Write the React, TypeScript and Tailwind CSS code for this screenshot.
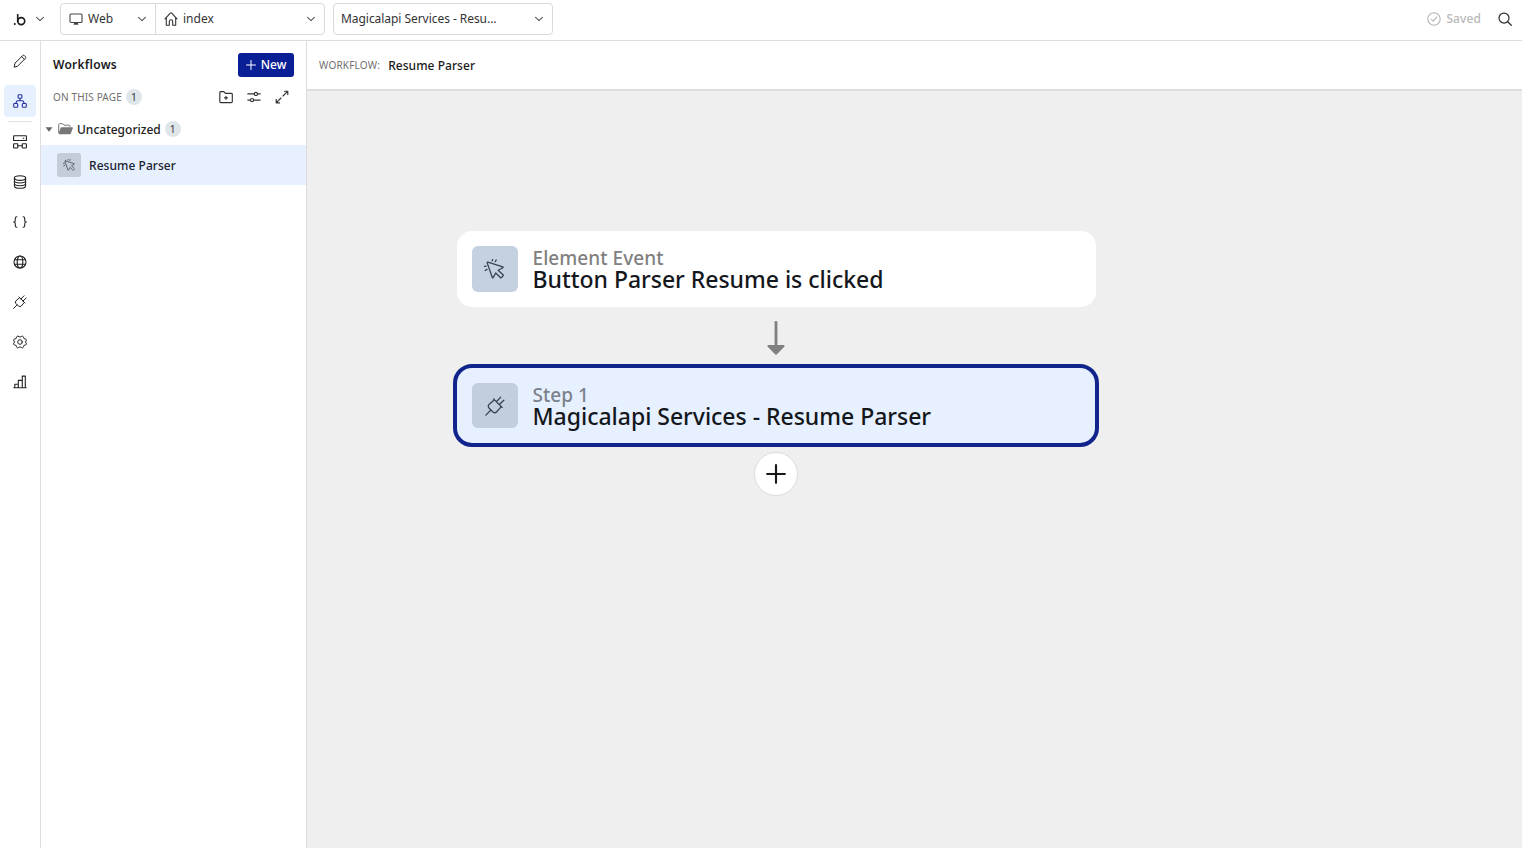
import type { ReactNode } from "react";
import clsx from "clsx";

// --- ICONS ---

type IconProps = {
    size?: number;
    className?: string;
    stroke?: number;
    children?: ReactNode;
};

const Icon = ({ size = 14, className, stroke = 1.1, children }: IconProps) => (
    <svg
        width={size}
        height={size}
        viewBox="0 0 14 14"
        fill="none"
        stroke="currentColor"
        strokeWidth={stroke}
        strokeLinecap="round"
        strokeLinejoin="round"
        className={clsx("shrink-0", className)}
    >
        {children}
    </svg>
);

const ChevronIcon = () => (
    <Icon size={8} stroke={1.9} className="text-[#555]">
        <path d="M1 4.2 7 9.8l6-5.6" />
    </Icon>
);

const MonitorIcon = () => (
    <Icon className="text-[#444]">
        <rect x="1" y="2" width="12" height="8.5" rx="1" />
        <path d="M5.2 10.5h3.600l.6 2.200H4.600Z" fill="currentColor" stroke="none" />
    </Icon>
);

const HomeIcon = () => (
    <Icon stroke={1.1}>
        <path d="M1 6.8 6.3 1.2a1 1 0 0 1 1.4 0L13 6.8M2.3 5.6v7.7h3V9.4a1.7 1.7 0 0 1 3.4 0v3.9h3V5.6" />
    </Icon>
);

const SearchIcon = () => (
    <Icon stroke={1.25}>
        <circle cx="6" cy="6" r="5" />
        <path d="m9.7 9.7 3.6 3.6" />
    </Icon>
);

const PencilIcon = () => (
    <Icon stroke={1}>
        <path d="M1.2 12.8 2 9.2l7.6-7.5a1.3 1.3 0 0 1 1.9 0l.8.8a1.3 1.3 0 0 1 0 1.9L4.8 12Z" />
        <path d="m8.7 2.6 2.7 2.7" />
    </Icon>
);

const WorkflowIcon = () => (
    <Icon>
        <rect x="5.1" y=".7" width="3.8" height="3.6" rx=".9" />
        <rect x=".7" y="9.5" width="4" height="3.8" rx=".9" />
        <rect x="9.3" y="9.5" width="4" height="3.8" rx=".9" />
        <path d="M7 4.4v2.4M2.7 9.4l1-2.1a.9.9 0 0 1 .8-.5h5a.9.9 0 0 1 .8.5l1 2.1" />
    </Icon>
);

const BackendIcon = () => (
    <Icon>
        <path d="M.6 5.5V1.4c0-.4.3-.7.7-.7h11.400c.4 0 .7.3.7.7v4.100ZM10.200 3.200h.6" />
        <rect x=".6" y="8.7" width="4.2" height="4.3" rx=".6" />
        <rect x="9.2" y="8.7" width="4.2" height="4.3" rx=".6" />
        <path d="M4.8 10.8h4.4" />
    </Icon>
);

const DatabaseIcon = () => (
    <Icon>
        <ellipse cx="7" cy="3.1" rx="5.6" ry="2.3" />
        <path d="M1.4 3.1V11c0 1.3 2.5 2.3 5.6 2.3s5.6-1 5.6-2.3V3.1M1.4 5.8C1.4 7.1 3.9 8 7 8s5.6-.9 5.6-2.2M1.4 8.5c0 1.3 2.5 2.2 5.6 2.2s5.6-.9 5.6-2.2" />
    </Icon>
);

const BracesIcon = () => (
    <Icon>
        <path d="M3.9 1.7c-1.1 0-1.6.5-1.6 1.5v2c0 1-.5 1.8-1.7 1.8 1.2 0 1.7.8 1.7 1.8v2c0 1 .5 1.5 1.6 1.5M10.1 1.7c1.1 0 1.6.5 1.6 1.5v2c0 1 .5 1.8 1.7 1.8-1.2 0-1.7.8-1.7 1.8v2c0 1-.5 1.5-1.6 1.5" />
    </Icon>
);

const GlobeIcon = () => (
    <Icon>
        <circle cx="7" cy="7" r="6" />
        <ellipse cx="7" cy="7" rx="2.8" ry="6" />
        <path d="M1.5 4.7h11M1.5 9.3h11" />
    </Icon>
);

const PlugIcon = ({ size = 14, stroke = 1 }: IconProps) => (
    <Icon size={size} stroke={stroke}>
        <path d="m6 2 6 6M6.600 2.600 3 5.800a1.900 1.900 0 0 0-.2 2.600l2.800 2.800a1.900 1.900 0 0 0 2.600-.2l3.200-3.600M4 10 .6 13.400M8 4l3-3.200M10 6l3.200-3" />
    </Icon>
);

const GearIcon = () => (
    <Icon stroke={1}>
        <circle cx="7" cy="7" r="2.3" />
        <path d="M5.6 1.5a2 2 0 0 0 2.8 0c.9-.8 2-.3 2 .8a1.7 1.7 0 0 0 1.7 1.6c1.3.1 1.7 1.3.9 2.1a1.5 1.5 0 0 0 0 2c.8.8.4 2-.9 2.1a1.7 1.7 0 0 0-1.7 1.6c0 1.1-1.1 1.6-2 .8a2 2 0 0 0-2.8 0c-.9.8-2 .3-2-.8a1.7 1.7 0 0 0-1.7-1.6C.6 10 .2 8.8 1 8a1.5 1.5 0 0 0 0-2c-.8-.8-.4-2 .9-2.1a1.7 1.7 0 0 0 1.7-1.6c0-1.1 1.1-1.6 2-.8Z" />
    </Icon>
);

const ChartIcon = () => (
    <Icon>
        <path d="M.8 12.800h12.400M1.800 12.600V9.200h3.500M5.300 12.600V5.400h4M9.300 12.600V1.100h3v11.500" />
    </Icon>
);

const FolderPlusIcon = () => (
    <Icon stroke={1.15}>
        <path d="M.8 11.700V2.500c0-.5.4-.9.900-.9h3.200l1.500 1.700h6c.5 0 .9.400.9.900v7.500c0 .5-.4.900-.9.900H1.700a.9.900 0 0 1-.9-.9Z" />
        <path d="M7 6.300v3M5.500 7.800h3" />
    </Icon>
);

const SlidersIcon = () => (
    <Icon stroke={1.15}>
        <path d="M.8 3.9h6.500M10.500 3.900h2.700M.8 10.100h2.700M6.700 10.100h6.500" />
        <circle cx="8.9" cy="3.9" r="1.6" />
        <circle cx="5.1" cy="10.1" r="1.6" />
    </Icon>
);

const ExpandIcon = () => (
    <Icon stroke={1.15}>
        <path d="M8 6l4.6-4.6M9.4 1.2h3.400v3.400M6 8l-4.600 4.600M1.200 9.400v3.400h3.400" />
    </Icon>
);

const FolderOpenIcon = () => (
    <svg width="15" height="12" viewBox="0 0 15 12" className="shrink-0 text-[#777]">
        <path d="M.7 10V1.500c0-.5.300-.8.800-.8h3.200l1.300 1.500h5.200c.5 0 .8.300.8.800v1" fill="none" stroke="currentColor" />
        <path d="M3.400 4.300h10.700c.6 0 .9.400.7.900l-2 5.300c-.2.500-.5.700-1 .7H1.200c-.6 0-.8-.4-.6-.9l2-5.400c.1-.4.400-.6.800-.6Z" fill="currentColor" />
    </svg>
);

const ClickIcon = ({ size = 20, stroke = 1.3 }: IconProps) => (
    <svg
        width={size}
        height={size}
        viewBox="0 0 20 20"
        fill="none"
        stroke="currentColor"
        strokeWidth={stroke}
        strokeLinecap="round"
        strokeLinejoin="round"
        className="mr-px mb-px shrink-0"
    >
        <path d="M3.9 3.1 18.8 7.9c.5.2.5.6.1.8l-4.8 2.600 4.900 4.500c.4.400.4.800 0 1.100l-1.500 1.600c-.4.400-.8.400-1.100 0L11.700 14l-2.600 4.600c-.2.400-.6.300-.8-.1L3.200 3.900c-.2-.5.200-.9.700-.8Z" />
        <path d="m8.200 1.900.4-1.400M11.300 2.600l.9-1.600M2.100 7.200l-1.600.2M3 10.400l-1.800 1.100" />
    </svg>
);

// --- DATA ---

const railItems = [
    { id: "backend", icon: <BackendIcon /> },
    { id: "data", icon: <DatabaseIcon /> },
    { id: "code", icon: <BracesIcon /> },
    { id: "api", icon: <GlobeIcon /> },
    { id: "plugins", icon: <PlugIcon /> },
    { id: "settings", icon: <GearIcon /> },
    { id: "logs", icon: <ChartIcon /> },
];

// --- PARTS ---

const Count = ({ value }: { value: number }) => (
    <span className="flex h-4 w-4 items-center justify-center rounded-full bg-[#dfe6e9] text-[11px] text-[#444]">
        {value}
    </span>
);

const TopBar = () => (
    <header className="flex h-[41px] shrink-0 items-start border-b border-[#dedede] pt-[3px] text-[12px] text-[#333]">
        <div className="flex h-8 w-[60px] items-center gap-[10px] pl-[13px]">
            <svg width="13" height="13" viewBox="0 0 13 13" className="text-[#1a1a1a]">
                <circle cx="1.8" cy="11" r="1" fill="currentColor" />
                <path d="M4.7 1v8" stroke="currentColor" strokeWidth="1.6" />
                <circle cx="8.2" cy="8.1" r="3.5" fill="none" stroke="currentColor" strokeWidth="1.6" />
            </svg>
            <ChevronIcon />
        </div>
        <div className="flex h-8 w-[265px] rounded border border-[#d9d9d9]">
            <button className="flex w-[95px] items-center border-r border-[#d9d9d9] pr-[9px] pl-2">
                <MonitorIcon />
                <span className="ml-[5px] flex-1 text-left">Web</span>
                <ChevronIcon />
            </button>
            <button className="flex flex-1 items-center pr-[9px] pl-2">
                <HomeIcon />
                <span className="ml-[5px] flex-1 text-left">index</span>
                <ChevronIcon />
            </button>
        </div>
        <button className="ml-2 flex h-8 w-[220px] items-center justify-between rounded border border-[#d9d9d9] pr-[9px] pl-[7px]">
            <span className="tracking-[-0.05px]">Magicalapi Services - Resu...</span>
            <ChevronIcon />
        </button>
        <div className="ml-auto flex h-8 items-center pr-[10px]">
            <Icon className="text-[#b5b5b5]">
                <circle cx="7" cy="7" r="6.2" />
                <path d="m4.3 7.4 1.9 1.8 3.7-4.3" />
            </Icon>
            <span className="mr-[17px] ml-[5px] font-medium tracking-[0.1px] text-[#b8b8b8]">Saved</span>
            <SearchIcon />
        </div>
    </header>
);

const Rail = () => (
    <nav className="flex w-[41px] shrink-0 flex-col items-center border-r border-[#dedede] pt-1 text-[#222]">
        <div className="flex h-8 w-8 items-center justify-center">
            <PencilIcon />
        </div>
        <div className="mt-2 flex h-8 w-8 items-center justify-center rounded bg-[#e6f0ff] text-[#27329b]">
            <WorkflowIcon />
        </div>
        <div className="my-1 h-px w-6 bg-[#e3e3e3]" />
        <div className="flex flex-col gap-2">
            {railItems.map((item) => (
                <div key={item.id} className="flex h-8 w-8 items-center justify-center">
                    {item.icon}
                </div>
            ))}
        </div>
    </nav>
);

const Sidebar = () => (
    <aside className="flex w-[266px] shrink-0 flex-col border-r border-[#dcdcdc]">
        <div className="flex h-12 items-center justify-between px-3">
            <h2 className="text-[12px] font-semibold tracking-[0.25px] text-[#1a1a1a]">Workflows</h2>
            <button className="flex h-6 w-14 items-center justify-center gap-[5px] rounded-[3px] bg-[#0a1f95] text-[12px] font-medium text-white">
                <Icon size={10} stroke={1.4}>
                    <path d="M7 .7v12.600M.7 7h12.600" />
                </Icon>
                New
            </button>
        </div>
        <div className="flex h-4 items-center px-3">
            <span className="mr-1 text-[10px] tracking-[0.15px] text-[#6f6f6f]">ON THIS PAGE</span>
            <Count value={1} />
            <div className="ml-auto flex gap-[14px] pr-[5px] text-[#333]">
                <FolderPlusIcon />
                <SlidersIcon />
                <ExpandIcon />
            </div>
        </div>
        <div className="flex h-10 items-center pt-[8px] pl-1 text-[#222]">
            <svg width="8" height="5" viewBox="0 0 8 5" className="text-[#666]">
                <path d="M.5 .3h7L4 4.700Z" fill="currentColor" />
            </svg>
            <div className="ml-[5px] flex items-center gap-1">
                <FolderOpenIcon />
                <span className="pt-px text-[12px] font-medium">Uncategorized</span>
                <Count value={1} />
            </div>
        </div>
        <div className="flex h-10 items-center gap-2 bg-[#e6f0ff] pl-4">
            <div className="flex h-6 w-6 items-center justify-center rounded-[3px] bg-[#c3ccd8] text-[#4c5661]">
                <ClickIcon size={12} stroke={1.4} />
            </div>
            <span className="pt-[2px] text-[12px] font-medium tracking-[0.05px] text-[#1b2230]">Resume Parser</span>
        </div>
    </aside>
);

type StepCardProps = {
    label: string;
    title: string;
    icon: ReactNode;
    selected?: boolean;
};

const StepCard = ({ label, title, icon, selected }: StepCardProps) => (
    <div
        className={clsx(
            "flex items-center gap-[15px]",
            selected
                ? "h-[83px] w-[646px] rounded-[19px] border-4 border-[#10248c] bg-[#e6f0ff] pl-[15px]"
                : "h-[76px] w-[639px] rounded-[15px] bg-white pl-[15.5px]"
        )}
    >
        <div
            className={clsx(
                "flex h-[45.5px] w-[45.5px] shrink-0 items-center justify-center rounded-[6px] text-[#39434f]",
                selected ? "bg-[#c2cddd]" : "bg-[#c5d0e0]"
            )}
        >
            {icon}
        </div>
        <div className={clsx("font-medium", !selected && "pb-[2px]")}>
            <div className={clsx("text-[19px] leading-[22px] tracking-[0.05px]", selected ? "text-[#7b828c]" : "text-[#808080]")}>
                {label}
            </div>
            <div className="-mt-px text-[23px] leading-[22px] tracking-[-0.02px] text-[#14171c]">{title}</div>
        </div>
    </div>
);

const Canvas = () => (
    <main className="flex min-w-0 flex-1 flex-col">
        <div className="flex h-[50px] items-center gap-2 border-b-2 border-[#dedede] pt-px pl-3">
            <span className="text-[10px] tracking-[0.2px] text-[#6f6f6f]">WORKFLOW:</span>
            <span className="pt-px text-[12px] font-medium tracking-[0.05px] text-[#1a1a1a]">Resume Parser</span>
        </div>
        <div className="flex-1 bg-[#efefef] pt-[140px] pl-[146px]">
            <div className="flex w-[646px] flex-col items-center">
                <StepCard label="Element Event" title="Button Parser Resume is clicked" icon={<ClickIcon />} />
                <svg width="18" height="34" viewBox="0 0 18 34" className="mt-[14px] mb-[9px] text-[#808080]">
                    <path d="M9 1.3v26" stroke="currentColor" strokeWidth="2.8" strokeLinecap="round" />
                    <path d="M1.5 24h15c1.1 0 1.5 1.1.8 1.8L10 33.3c-.6.6-1.4.6-2 0L.7 25.800C0 25.100.4 24 1.500 24Z" fill="currentColor" />
                </svg>
                <StepCard label="Step 1" title="Magicalapi Services - Resume Parser" icon={<PlugIcon size={20} stroke={0.9} />} selected />
                <button className="mt-[5px] flex h-[44px] w-[44px] items-center justify-center rounded-full border border-[#dcdcdc] bg-white text-[#1a1a1a]">
                    <Icon size={20} stroke={1.5}>
                        <path d="M7 .8v12.400M.8 7h12.400" />
                    </Icon>
                </button>
            </div>
        </div>
    </main>
);

export default function App() {
    return (
        <div className="flex h-screen flex-col overflow-hidden bg-white font-['Noto_Sans',sans-serif]">
            <TopBar />
            <div className="flex min-h-0 flex-1">
                <Rail />
                <Sidebar />
                <Canvas />
            </div>
        </div>
    );
}
